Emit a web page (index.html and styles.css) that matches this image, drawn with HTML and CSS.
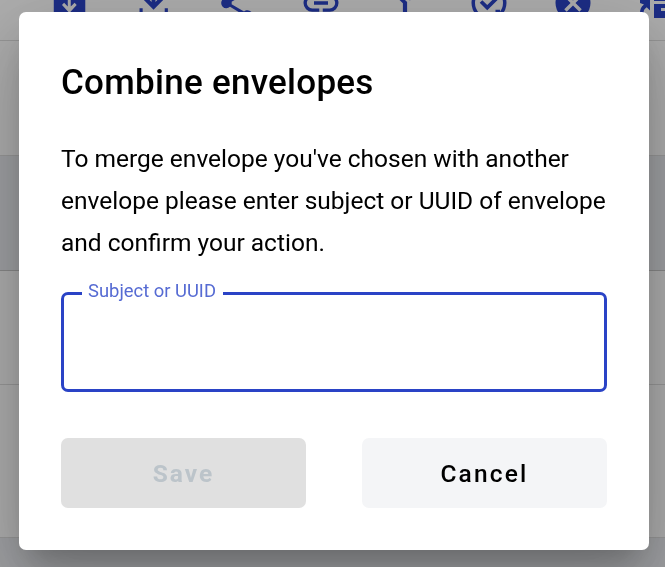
FILE: index.html
```html
<!DOCTYPE html>
<html lang="en">
<head>
<meta charset="utf-8">
<title>Combine envelopes</title>
<link rel="stylesheet" href="styles.css">
</head>
<body>
<div class="page" aria-hidden="true">
  <div class="toolbar">
    <svg class="icon" viewBox="0 0 24 24"><path fill-rule="evenodd" d="M3.3 3h18v18h-18zM11.3 6v8L9.2 11.9 8 13.1l4.2 4.6 4.2-4.6-1.2-1.2-2.2 2.1V6z"/></svg>
    <svg class="icon" viewBox="0 0 24 24"><path d="M11.2 3h2.2v8.4l3-3 1.6 1.7-5.7 5.8-5.7-5.8 1.6-1.7 3 3zM4.3 15h1.8v4h12.6v-4h1.8v6H4.3z"/></svg>
    <svg class="icon" viewBox="0 0 24 24"><path d="M18 16.1c-.8 0-1.4.3-2 .8l-7.1-4.2c.1-.4.1-1 0-1.4L16 7.2A3 3 0 1 0 15 5c0 .2 0 .5.1.7L8 9.8a3 3 0 1 0 0 4.4l7.1 4.2A2.9 2.9 0 1 0 18 16.1z"/></svg>
    <svg class="icon" viewBox="0 0 24 24"><path d="M3.9 12c0-1.7 1.4-3.1 3.1-3.1h4V7H7a5 5 0 0 0 0 10h4v-1.9H7A3.1 3.1 0 0 1 3.9 12zM8 13h8v-2H8zm9-6h-4v1.9h4a3.1 3.1 0 0 1 0 6.2h-4V17h4a5 5 0 0 0 0-10z"/></svg>
    <svg class="icon" viewBox="0 0 24 24"><path d="M14 4l2.3 2.3-2.9 2.9 1.4 1.4 2.9-2.9L20 10V4zM10 4H4v6l2.3-2.3 4.5 4.5V20h2.4v-8.6L7.7 6.3z"/></svg>
    <svg class="icon" viewBox="0 0 24 24"><path fill-rule="evenodd" d="M12 2a10 10 0 1 0 0 20 10 10 0 0 0 0-20zm0 2a8 8 0 1 1 0 16 8 8 0 0 1 0-16z"/><path d="M8.2 10.4l-1.5 1.5 4.3 4.3 7-7-1.5-1.5-5.5 5.5zM15.7 15.8h2.6v3h-2.6z"/></svg>
    <svg class="icon" viewBox="0 0 24 24"><path d="M12 2a10 10 0 1 0 0 20 10 10 0 0 0 0-20zm5 13.6L15.6 17 12 13.4 8.4 17 7 15.6l3.6-3.6L7 8.4 8.4 7l3.6 3.6L15.6 7 17 8.4 13.4 12z"/></svg>
    <svg class="icon" viewBox="0 0 42 42"><path d="M4 18h10v10.5l-3.3-3.3c-2.2 1.6-3 2.8-3.2 5.8H4c0-3.8 1-6 4-8.5L4 21zM18 16h24v3H18zM18 22h24v4H25v3h17v7H18z"/></svg>
  </div>
  <div class="row"></div>
  <div class="row row-selected"></div>
  <div class="row row-mid"></div>
  <div class="row row-tall"></div>
  <div class="footer"></div>
</div>
<div class="backdrop">
  <form class="dialog" role="dialog" aria-labelledby="title">
    <h2 class="title" id="title">Combine envelopes</h2>
    <p class="message">To merge envelope you've chosen with another envelope please enter subject or UUID of envelope and confirm your action.</p>
    <fieldset class="field">
      <legend class="label">Subject or UUID</legend>
      <input class="input" type="text" aria-label="Subject or UUID">
    </fieldset>
    <div class="actions">
      <button class="button save" type="button" disabled>Save</button>
      <button class="button cancel" type="button">Cancel</button>
    </div>
  </form>
</div>
</body>
</html>
```
FILE: styles.css
```css
* {
  box-sizing: border-box;
}

body {
  margin: 0;
  height: 567px;
  overflow: hidden;
  font-family: Roboto, "Liberation Sans", sans-serif;
  color: #000;
}

.page {
  width: 665px;
  height: 567px;
  overflow: hidden;
  background: #fff;
}

.toolbar {
  display: flex;
  gap: 42px;
  height: 41px;
  padding-left: 48px;
  border-bottom: 1px solid #dedede;
}

.icon {
  flex: none;
  width: 42px;
  height: 42px;
  margin-top: -18px;
  fill: #2a43c6;
}

.row {
  height: 115px;
  border-bottom: 1px solid #dedede;
}

.row-selected {
  background: #eaecf0;
  border-bottom-color: #c8c8c8;
}

.row-mid {
  height: 114px;
}

.row-tall {
  height: 153px;
}

.footer {
  height: 29px;
  background: #eaecf0;
}

.backdrop {
  position: fixed;
  inset: 0;
  padding: 12px 16px 17px 19px;
  background: rgba(0, 0, 0, 0.32);
}

.dialog {
  height: 538px;
  padding: 42px;
  border-radius: 7px;
  background: #fff;
  box-shadow:
    0 19.25px 26.25px -12.25px rgba(0, 0, 0, 0.2),
    0 42px 66.5px 5.25px rgba(0, 0, 0, 0.14),
    0 15.75px 80.5px 14px rgba(0, 0, 0, 0.12);
}

.title {
  margin: 0 0 26px;
  font-size: 35px;
  font-weight: 500;
  line-height: 58px;
  letter-spacing: 0.27px;
}

.message {
  margin: 0;
  font-size: 24.5px;
  line-height: 42px;
}

.field {
  height: 112px;
  margin: 16px 0 46px;
  padding: 0 18px;
  border: 3px solid #2a43c6;
  border-radius: 7px;
}

.label {
  height: 27px;
  padding: 0 7px 0 6px;
  font-size: 18.4px;
  line-height: 22px;
  color: #566bd3;
}

.input {
  width: 100%;
  height: 60px;
  padding: 0;
  border: 0;
  outline: 0;
  background: transparent;
  font: 24.5px Roboto, sans-serif;
}

.actions {
  display: flex;
  gap: 56px;
}

.button {
  flex: 1;
  height: 70px;
  padding: 0;
  border: 0;
  border-radius: 7px;
  font: 500 24.5px Roboto, sans-serif;
  letter-spacing: 2.19px;
}

.save {
  background: #e0e0e0;
  color: #bcc4ca;
  font-weight: 700;
  letter-spacing: 2px;
}

.cancel {
  background: #f4f5f7;
  color: #000;
}
```
